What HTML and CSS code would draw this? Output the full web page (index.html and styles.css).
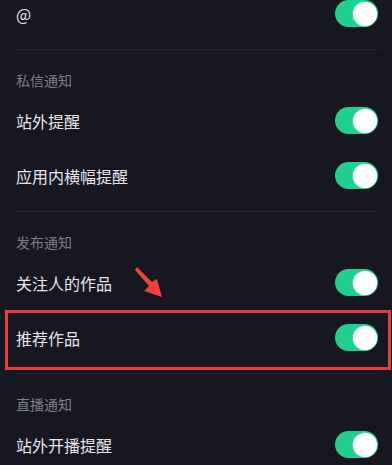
FILE: index.html
```html
<!DOCTYPE html>
<html lang="zh-CN">
<head>
<meta charset="utf-8">
<title>通知设置</title>
<link rel="stylesheet" href="styles.css">
</head>
<body>
<div class="page">
  <div class="group">
    <div class="row"><span class="label">@</span><span class="toggle on"><span class="knob"></span></span></div>
  </div>
  <div class="divider"></div>
  <div class="group">
    <div class="header">私信通知</div>
    <div class="row"><span class="label">站外提醒</span><span class="toggle on"><span class="knob"></span></span></div>
    <div class="row"><span class="label">应用内横幅提醒</span><span class="toggle on"><span class="knob"></span></span></div>
  </div>
  <div class="divider"></div>
  <div class="group">
    <div class="header">发布通知</div>
    <div class="row"><span class="label">关注人的作品</span><span class="toggle on"><span class="knob"></span></span></div>
    <div class="row highlighted"><span class="label">推荐作品</span><span class="toggle on"><span class="knob"></span></span><span class="mark-box"></span></div>
  </div>
  <div class="divider"></div>
  <div class="group">
    <div class="header">直播通知</div>
    <div class="row"><span class="label">站外开播提醒</span><span class="toggle on"><span class="knob"></span></span></div>
  </div>
</div>
<svg class="arrow" width="392" height="465" viewBox="0 0 392 465" aria-hidden="true">
  <polygon points="137,267 152,282 157,279 162,297 144,291 149,286 135,270" fill="#f0413f"/>
</svg>
</body>
</html>
```
FILE: styles.css
```css
html, body {
  margin: 0;
  padding: 0;
  background: #161720;
}
body {
  width: 392px;
  height: 465px;
  overflow: hidden;
  position: relative;
  font-family: "Noto Sans CJK SC", "Noto Sans", sans-serif;
}
.page {
  margin-top: -14px;
  padding: 0 14px 0 16px;
}
.group {
  display: flex;
  flex-direction: column;
}
.header {
  padding-top: 20px;
  padding-bottom: 3px;
  line-height: 20px;
  font-size: 14px;
  color: #7e7f87;
}
.row {
  height: 55px;
  display: flex;
  align-items: center;
  justify-content: space-between;
  position: relative;
}
.label {
  font-size: 16px;
  color: #e6e6e9;
  line-height: 22px;
}
.divider {
  height: 1px;
  margin-top: 8px;
  margin-right: -2px;
  background: #22232d;
}
.toggle {
  width: 43px;
  height: 27px;
  border-radius: 14px;
  background: #22cf8f;
  display: flex;
  align-items: center;
  justify-content: flex-end;
  padding: 0 1px;
  box-sizing: border-box;
}
.knob {
  width: 24px;
  height: 24px;
  border-radius: 50%;
  background: #ffffff;
  box-shadow: 0 0 2px rgba(255, 255, 255, 0.6);
}
.mark-box {
  position: absolute;
  left: -11px;
  right: -13px;
  top: 0;
  height: 60px;
  border: 3px solid #e2403f;
  box-sizing: border-box;
  pointer-events: none;
}
.arrow {
  position: absolute;
  left: 0;
  top: 0;
}
```
